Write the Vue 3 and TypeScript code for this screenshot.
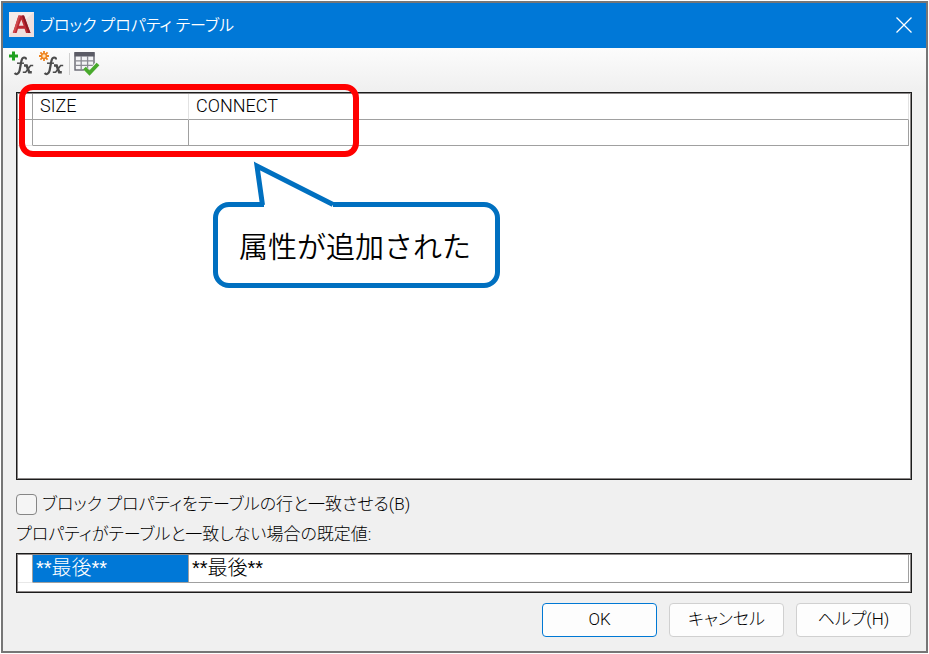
<script setup lang="ts">
import { ref } from 'vue'

interface Column {
  name: string
  value: string
  fallback: string
}

const columns: Column[] = [
  { name: 'SIZE', value: '', fallback: '**最後**' },
  { name: 'CONNECT', value: '', fallback: '**最後**' },
]

const matchRows = ref(false)
const selected = ref(0)
</script>

<template>
  <main class="dialog">
    <header class="titlebar">
      <svg class="app-logo" viewBox="0 0 25 25" aria-hidden="true">
        <rect width="25" height="25" fill="#efdfdd" />
        <path d="M0 0h25L0 22z" fill="#f6ecea" />
        <path d="M9.500 3.500h5.500l6.500 17.500h-4.500l-1.400-4.200H9L7.600 21H3.800z" fill="#bd2832" />
        <path d="M9.500 3.500h2L6 21H3.800z" fill="#cf4a4e" />
        <path d="M15 3.500l6.500 17.500h-2.400L13 3.500z" fill="#8e1824" />
        <path d="M12.300 7.500l2.300 6.300H9.900z" fill="#f0dedd" />
      </svg>
      <h1 class="title">ブロック プロパティ テーブル</h1>
      <button class="close" type="button" aria-label="閉じる">
        <svg viewBox="0 0 16 16" width="16" height="16" aria-hidden="true">
          <path d="M0.5 0.5l15 15M15.5 0.5l-15 15" fill="none" stroke="#fff" stroke-width="1.3" />
        </svg>
      </button>
    </header>

    <div class="toolbar">
      <button class="tool" type="button" aria-label="パラメータを追加">
        <svg viewBox="0 0 26 26" width="26" height="26" aria-hidden="true">
          <path d="M4.5 0.5v9M0 5h9" stroke="#20a020" stroke-width="3" />
          <g fill="none" stroke="#4c4c4c">
            <path d="M17 8.500c0-2.800-3.800-3-4.600 1.500l-1.800 9.500c-0.600 3.200-3.300 4.500-5 2.600" stroke-width="2.200" />
            <path d="M8 12.200h7" stroke-width="1.500" />
            <path d="M15 14.500h2.600l2.600 6.800h2.600" stroke-width="2.600" />
            <path d="M24.200 14.500h-2.600l-5 6.800h-2.800" stroke-width="1.600" />
          </g>
        </svg>
      </button>
      <button class="tool" type="button" aria-label="パラメータを新規作成">
        <svg viewBox="0 0 26 26" width="26" height="26" aria-hidden="true">
          <path
            d="M5 0v3M5 7v3M0 5h3M7 5h3M1.4 1.4l2.2 2.2M6.4 6.4l2.2 2.2M8.6 1.4L6.4 3.6M3.6 6.4L1.4 8.6"
            stroke="#ee8420"
            stroke-width="1.8"
          />
          <circle cx="5" cy="5" r="2.4" fill="#ffe5bd" stroke="#ee8420" stroke-width="1.4" />
          <g fill="none" stroke="#4c4c4c">
            <path d="M17 8.500c0-2.800-3.800-3-4.600 1.500l-1.800 9.500c-0.600 3.200-3.300 4.500-5 2.600" stroke-width="2.200" />
            <path d="M8 12.200h7" stroke-width="1.500" />
            <path d="M15 14.500h2.600l2.600 6.800h2.600" stroke-width="2.600" />
            <path d="M24.200 14.500h-2.600l-5 6.800h-2.800" stroke-width="1.600" />
          </g>
        </svg>
      </button>
      <span class="divider"></span>
      <button class="tool" type="button" aria-label="ブロック プロパティ テーブルを監査">
        <svg viewBox="0 0 26 26" width="26" height="26" aria-hidden="true">
          <rect x="1" y="2" width="19" height="17" fill="#f4f4f6" stroke="#666670" stroke-width="1.4" />
          <rect x="0.5" y="1" width="20" height="4.5" fill="#5c5c66" />
          <path d="M1 9.8h19M1 14.4h19M7.2 5v14M13.6 5v14" stroke="#8a8a92" stroke-width="1.3" />
          <path d="M11 18.5l4.6 4.3L24 12.6" fill="none" stroke="#f4f4f4" stroke-width="5.5" />
          <path d="M10.5 17l5 5L24 13" fill="none" stroke="#48a92c" stroke-width="3.8" />
        </svg>
      </button>
    </div>

    <section class="content">
      <div class="frame frame-main">
        <table class="grid">
          <thead>
            <tr>
              <td class="stub"></td>
              <th v-for="c in columns" :key="c.name" class="col" scope="col">{{ c.name }}</th>
            </tr>
          </thead>
          <tbody>
            <tr>
              <td class="stub"></td>
              <td v-for="c in columns" :key="c.name" class="col">{{ c.value }}</td>
            </tr>
          </tbody>
        </table>

        <div class="highlight"></div>
        <div class="callout">
          <svg class="pointer" viewBox="0 0 90 50" width="90" height="50" aria-hidden="true">
            <path d="M15 45L8 6L84 45v5H15z" fill="#fff" />
            <path d="M13.5 45L8 6L84 44.5" fill="none" stroke="#0070c0" stroke-width="5" stroke-miterlimit="8" />
          </svg>
          <span>属性が追加された</span>
        </div>
      </div>

      <label class="match">
        <input v-model="matchRows" type="checkbox" />
        <span>ブロック プロパティをテーブルの行と一致させる(B)</span>
      </label>
      <p class="caption">プロパティがテーブルと一致しない場合の既定値:</p>

      <div class="frame frame-default">
        <table class="grid" aria-label="既定値">
          <tbody>
            <tr>
              <td class="stub"></td>
              <td
                v-for="(c, i) in columns"
                :key="c.name"
                class="col fallback"
                :class="{ selected: selected === i }"
                @click="selected = i"
              >{{ c.fallback }}</td>
            </tr>
          </tbody>
        </table>
      </div>
    </section>

    <footer class="actions">
      <button class="btn primary" type="button">OK</button>
      <button class="btn" type="button">キャンセル</button>
      <button class="btn" type="button">ヘルプ(H)</button>
    </footer>
  </main>
</template>

<style>
body {
  margin: 0;
  background: #fff;
}
</style>

<style scoped>
.dialog {
  box-sizing: border-box;
  display: flex;
  flex-direction: column;
  min-height: calc(100vh - 2px);
  margin: 1px;
  border: 2px solid #767676;
  background: #f0f0f0;
  color: #000;
  font-family: Roboto, 'Noto Sans CJK JP', sans-serif;
  font-size: 17px;
  font-weight: 300;
  font-feature-settings: 'palt';
  line-height: 24px;
}

.titlebar {
  display: flex;
  align-items: center;
  height: 45px;
  padding: 0 14px 0 6px;
  background: #0078d7;
  color: #fff;
}

.app-logo {
  width: 25px;
  height: 25px;
  margin-bottom: 2px;
}

.title {
  flex: 1;
  margin: 0 0 0 6px;
  font-size: 16px;
  font-weight: 350;
}

button {
  font: inherit;
  font-feature-settings: inherit;
  color: inherit;
}

.close,
.tool {
  display: flex;
  padding: 0;
  border: 0;
  background: none;
}

.close {
  margin-bottom: 2px;
}

.toolbar {
  display: flex;
  gap: 4px;
  height: 41px;
  padding: 3px 6px 0;
  box-sizing: border-box;
  background: linear-gradient(#fcfcfc, #f0f0f0);
}

.divider {
  width: 1px;
  height: 22px;
  margin-top: 2px;
  background: #cfcfcf;
}

.content {
  display: flex;
  flex: 1;
  flex-direction: column;
  padding: 3px 14px 0 13px;
}

.frame {
  padding: 1px;
  border: 1px solid #1c1c1c;
  background: #fff;
  box-shadow: inset 0 0 0 1px #8c8888;
}

.frame-main {
  position: relative;
  flex: 1;
}

.grid {
  width: calc(100% - 1px);
  table-layout: fixed;
  border-spacing: 0;
}

.grid td,
.grid th {
  box-sizing: border-box;
  height: 26px;
  padding: 0 7px 2px;
  border-right: 1px solid #a0a0a0;
  border-bottom: 1px solid #a0a0a0;
  font-size: 18px;
  font-weight: 300;
  line-height: 23px;
  text-align: left;
}

.grid thead .col {
  border-right-color: #e2e2e2;
}

.grid .stub {
  width: 15px;
  padding: 0;
}

.grid tbody .stub {
  border-bottom-color: #e8e8e8;
}

.grid .col:nth-child(2) {
  width: 156px;
}

.grid .fallback {
  height: 28px;
  padding: 0 3px;
  font-family: 'Liberation Sans', 'Noto Sans CJK JP', sans-serif;
  font-size: 20px;
}

.grid .selected {
  background: #0078d7;
  color: #fff;
}

.highlight {
  position: absolute;
  top: -9px;
  left: 2px;
  box-sizing: border-box;
  width: 340px;
  height: 73px;
  border: 6px solid #f00;
  border-radius: 14px;
}

.callout {
  position: absolute;
  top: 109px;
  left: 196px;
  display: flex;
  align-items: center;
  justify-content: center;
  box-sizing: border-box;
  width: 287px;
  height: 86px;
  padding: 5px 3px 0 0;
  border: 5px solid #0070c0;
  border-radius: 16px;
  background: #fff;
  font-size: 29px;
  font-weight: 350;
  font-feature-settings: normal;
  line-height: 40px;
}

.pointer {
  position: absolute;
  top: -47px;
  left: 31px;
}

.match {
  display: flex;
  align-items: center;
  gap: 5px;
  height: 30px;
  margin-top: 9px;
}

.match input {
  appearance: none;
  box-sizing: border-box;
  width: 21px;
  height: 21px;
  margin: 0;
  border: 1px solid #868686;
  border-radius: 4px;
  background: #f5f5f5;
}

.match input:checked {
  background: #0078d7;
}

.caption {
  margin: 0 0 4px;
  height: 30px;
  line-height: 30px;
}

.frame-default {
  height: 36px;
}

.actions {
  display: flex;
  justify-content: flex-end;
  gap: 12px;
  padding: 10px 15px 14px;
}

.btn {
  box-sizing: border-box;
  width: 115px;
  height: 34px;
  padding: 0 0 2px;
  border: 1px solid #d0d0d0;
  border-radius: 4px;
  background: #fdfdfd;
}

.btn.primary {
  border-color: #0078d4;
}
</style>
